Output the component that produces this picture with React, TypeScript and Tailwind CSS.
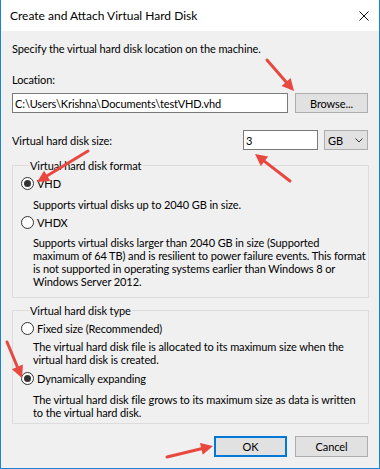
import React from "react";

type Arrow = { x1: number; y1: number; x2: number; y2: number };

const arrows: Arrow[] = [
  { x1: 267, y1: 60, x2: 294, y2: 91 },
  { x1: 290, y1: 181, x2: 255, y2: 154 },
  { x1: 88, y1: 151, x2: 37, y2: 182 },
  { x1: 7, y1: 342, x2: 22, y2: 378 },
  { x1: 167, y1: 457, x2: 213, y2: 446 },
];

function ArrowShape({ a }: { a: Arrow }) {
  const dx = a.x2 - a.x1;
  const dy = a.y2 - a.y1;
  const len = Math.sqrt(dx * dx + dy * dy);
  const ux = dx / len;
  const uy = dy / len;
  const nx = -uy;
  const ny = ux;
  const L = 12;
  const W = 6;
  const bx = a.x2 - ux * L;
  const by = a.y2 - uy * L;
  const pts = `${a.x2},${a.y2} ${bx + nx * W},${by + ny * W} ${bx - nx * W},${by - ny * W}`;
  return (
    <g>
      <line
        x1={a.x1}
        y1={a.y1}
        x2={bx + ux * 2}
        y2={by + uy * 2}
        stroke="#e8483f"
        strokeWidth={3}
        strokeLinecap="round"
      />
      <polygon points={pts} fill="#e8483f" />
    </g>
  );
}

function Radio({ checked, label }: { checked?: boolean; label: string }) {
  return (
    <div className="flex items-center h-[13px]">
      <span className="w-[13px] h-[13px] rounded-full border border-[#333333] bg-white flex items-center justify-center shrink-0">
        {checked && <span className="w-[7px] h-[7px] rounded-full bg-[#333333]" />}
      </span>
      <span className="ml-[3px]">{label}</span>
    </div>
  );
}

export default function App() {
  return (
    <div className="w-[380px] h-[469px] bg-[#f0f0f0] border-x border-b border-[#1883d7] flex flex-col relative text-[11px] tracking-[-0.1px] leading-[13px] text-black font-['Lato',sans-serif] overflow-hidden">
      <div className="h-[31px] bg-white flex items-center pl-[9px] pr-[10px] shrink-0">
        <span className="text-[12px] tracking-normal">Create and Attach Virtual Hard Disk</span>
        <svg className="ml-auto" width="10" height="10" viewBox="0 0 10 10">
          <path d="M0.5 0.5 L9.5 9.5 M9.5 0.5 L0.5 9.5" stroke="#111" strokeWidth="1" />
        </svg>
      </div>
      <div className="flex flex-col px-[11px]">
        <p className="mt-[11px]">Specify the virtual hard disk location on the machine.</p>
        <p className="mt-[18px]">Location:</p>
        <div className="mt-[7px] flex">
          <div className="w-[276px] h-[20px] bg-white border border-[#7a7a7a] flex items-center pl-[2px] whitespace-nowrap">
            C:\Users\Krishna\Documents\testVHD.vhd
          </div>
          <div className="ml-[7px] w-[73px] h-[20px] bg-[#e1e1e1] border border-[#adadad] flex items-center justify-center">
            Browse...
          </div>
        </div>
        <div className="mt-[17px] h-[20px] flex items-center">
          <span className="flex-1">Virtual hard disk size:</span>
          <div className="w-[75px] h-[20px] bg-white border border-[#7a7a7a] flex items-center pl-[2px]">3</div>
          <div className="ml-[6px] w-[44px] h-[20px] bg-[#e1e1e1] border border-[#adadad] flex items-center pl-[3px]">
            <span>GB</span>
            <svg className="ml-auto mr-[4px]" width="8" height="5" viewBox="0 0 8 5">
              <path d="M0.5 0.5 L4 4 L7.5 0.5" stroke="#333" strokeWidth="1" fill="none" />
            </svg>
          </div>
        </div>
        <fieldset className="mt-[9px] w-[357px] border border-[#dcdcdc] pl-[8px] pb-[9px]">
          <legend className="ml-[8px] px-[1px]">Virtual hard disk format</legend>
          <div className="mt-[5px]">
            <Radio checked label="VHD" />
          </div>
          <p className="mt-[8px] ml-[12px]">Supports virtual disks up to 2040 GB in size.</p>
          <div className="mt-[5px]">
            <Radio label="VHDX" />
          </div>
          <p className="mt-[7px] ml-[12px] whitespace-nowrap">
            Supports virtual disks larger than 2040 GB in size (Supported
            <br />
            maximum of 64 TB) and is resilient to power failure events. This format
            <br />
            is not supported in operating systems earlier than Windows 8 or
            <br />
            Windows Server 2012.
          </p>
        </fieldset>
        <fieldset className="mt-[6px] w-[357px] border border-[#dcdcdc] pl-[8px] pb-[4px]">
          <legend className="ml-[8px] px-[1px]">Virtual hard disk type</legend>
          <div className="mt-[5px]">
            <Radio label="Fixed size (Recommended)" />
          </div>
          <p className="mt-[5px] ml-[12px] whitespace-nowrap">
            The virtual hard disk file is allocated to its maximum size when the
            <br />
            virtual hard disk is created.
          </p>
          <div className="mt-[6px]">
            <Radio checked label="Dynamically expanding" />
          </div>
          <p className="mt-[8px] ml-[12px] whitespace-nowrap">
            The virtual hard disk file grows to its maximum size as data is written
            <br />
            to the virtual hard disk.
          </p>
        </fieldset>
        <div className="mt-[12px] flex justify-end gap-[8px]">
          <div className="w-[73px] h-[21px] bg-[#e1e1e1] border-2 border-[#0078d7] flex items-center justify-center">
            OK
          </div>
          <div className="w-[73px] h-[21px] bg-[#e1e1e1] border border-[#adadad] flex items-center justify-center">
            Cancel
          </div>
        </div>
      </div>
      <svg className="absolute left-[-1px] top-0 pointer-events-none" width="380" height="469" viewBox="0 0 380 469">
        {arrows.map((a, i) => (
          <ArrowShape key={i} a={a} />
        ))}
      </svg>
    </div>
  );
}
